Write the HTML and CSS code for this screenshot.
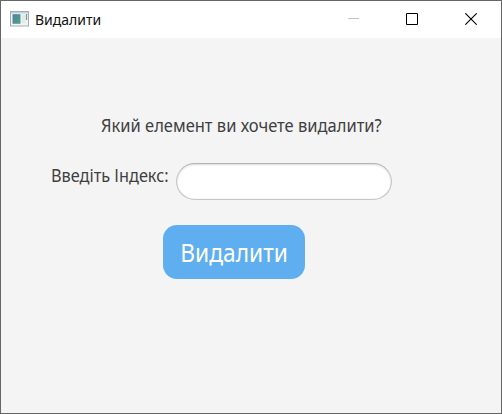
FILE: index.html
```html
<!DOCTYPE html>
<html lang="uk">
<head>
<meta charset="utf-8">
<title>Видалити</title>
<link rel="stylesheet" href="styles.css">
</head>
<body>
<div class="window">
  <header class="titlebar">
    <svg class="app-icon" width="19" height="16" viewBox="0 0 19 16">
      <defs><linearGradient id="g" x1="0" y1="0" x2="1" y2="1"><stop offset="0" stop-color="#4a83a6"/><stop offset="1" stop-color="#55a082"/></linearGradient></defs>
      <rect x=".5" y=".5" width="18" height="14.5" fill="#f3f6f7" stroke="#a3adb3"/>
      <rect x="1" y="1" width="17" height="1.5" fill="#c5d0d8"/>
      <rect x="2.5" y="3.2" width="8" height="9.6" fill="url(#g)"/>
      <rect x="11.5" y="3.5" width="4" height="9" fill="#e4e9eb"/>
      <rect x="15.9" y="3" width="1.3" height="6" fill="#72a58c"/>
    </svg>
    <span class="title">Видалити</span>
    <div class="controls">
      <svg width="12" height="12" viewBox="0 0 12 12"><path d="M1 5.5h11" stroke="#c3c3c3"/></svg>
      <svg width="12" height="12" viewBox="0 0 12 12"><path d="M.5.5h11v11H.5z" fill="none" stroke="#000"/></svg>
      <svg width="12" height="12" viewBox="0 0 12 12"><path d="M.3.3l11.4 11.4M11.7.3L.3 11.7" fill="none" stroke="#000" stroke-width="1.1"/></svg>
    </div>
  </header>
  <main class="content">
    <p class="question">Який елемент ви хочете видалити?</p>
    <div class="row">
      <label class="label" for="index">Введіть Індекс:</label>
      <input class="field" id="index" type="text">
    </div>
    <button class="delete" type="button"><span class="caption">Видалити</span></button>
  </main>
</div>
</body>
</html>
```
FILE: styles.css
```css
* { box-sizing: border-box; }
body { margin: 0; font-family: "Noto Sans", "Open Sans", sans-serif; }
.window {
  width: 502px;
  height: 414px;
  border: 1px solid #666;
  background: #f4f4f4;
  overflow: hidden;
}
.titlebar {
  display: flex;
  align-items: center;
  height: 37px;
  padding: 0 24px 2px 9px;
  background: #fff;
}
.app-icon { margin-right: 6px; }
.title {
  padding-top: 2px;
  font-size: 14px;
  line-height: 20px;
  color: #111;
  white-space: nowrap;
}
.controls {
  display: flex;
  gap: 47px;
  margin-left: auto;
}
.content {
  display: flex;
  flex-direction: column;
  align-items: flex-start;
  padding: 76px 0 0 50px;
  color: #404040;
}
.question {
  margin: 0 0 0 50px;
  font-size: 18px;
  line-height: 22px;
  white-space: nowrap;
  transform: scaleX(0.917);
  transform-origin: left;
}
.row {
  display: flex;
  margin-top: 27px;
}
.label {
  width: 125px;
  font-size: 18px;
  line-height: 25px;
  white-space: nowrap;
  transform: scaleX(0.905);
  transform-origin: left;
}
.field {
  width: 216px;
  height: 37px;
  padding: 0 16px;
  border: 1.5px solid #c6c6c6;
  border-top-color: #b4b4b4;
  border-radius: 19px;
  background: #fff;
  box-shadow: inset 0 1px 2px #ddd, inset 0 0 1px #bbb;
  outline: none;
}
.delete {
  width: 142px;
  height: 54px;
  margin: 25px 0 0 112px;
  padding: 0 0 0 1px;
  border: 0;
  border-radius: 14px;
  background: #5eaef0;
  color: #fff;
  font: 25px/54px "Noto Sans", "Open Sans", sans-serif;
}
.caption {
  display: inline-block;
  transform: scaleX(0.91);
}
```
